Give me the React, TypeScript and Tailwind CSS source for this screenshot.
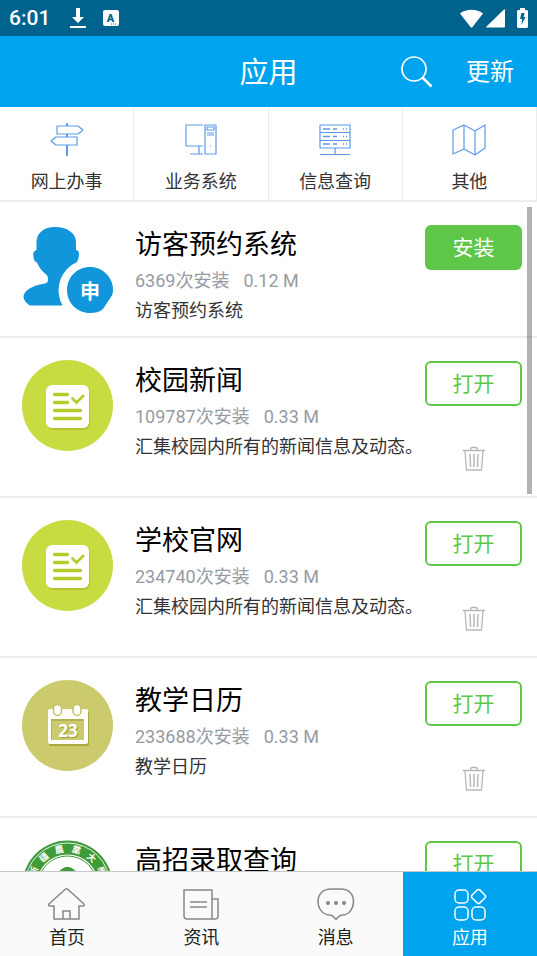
import { FC, ReactNode } from "react";

type AppItem = {
  name: string;
  installs: number;
  size: string;
  description: string;
  installed: boolean;
  icon: ReactNode;
};

const VisitorIcon: FC = () => (
  <svg viewBox="0 0 91 91" className="size-[91px]" aria-hidden="true">
    <path
      fill="#1296db"
      d="M33 3C22 3 14.500 9 14.500 18L14.500 26C11 27 11 30 11.500 33C12 37 13.500 38 15 38.500C17 43 19 46 23 49.500C26 52 26 53 26 56C26 58 25 59 23 59.500C13 61 3 65 1.500 72C1.500 76 4 79 8 81.500L40.500 81.500A31 31 0 0 1 55 38C56 36 57 33 57 30C57 28 56 26 54 26L54 18C54 9 45 3 33 3Z"
    />
    <path
      fill="#1296db"
      d="M68 43C80.500 43 91 53 91 66C91 69 90.500 70.500 89 73L81 85C77.500 88 73 89 68 89C55 89 45 79 45 66C45 53 55 43 68 43Z"
    />
    <text x="68" y="75" textAnchor="middle" fontSize="20" fontWeight="700" fill="#fff">申</text>
  </svg>
);

const NewsIcon: FC = () => (
  <svg viewBox="0 0 91 91" className="size-[91px]" aria-hidden="true">
    <circle cx="45.500" cy="45.500" r="45.500" fill="#c8db40" />
    <rect x="25" y="26" width="43" height="44" rx="6" fill="#b3c52f" />
    <rect x="24" y="25" width="43" height="43" rx="6" fill="#fff" />
    <g fill="none" stroke="#b8cb2c" strokeLinecap="round" strokeWidth="3.400">
      <path d="M32.500 34.500h13M32.500 42.500h13M32.500 50.500h26M32.500 58.500h26" />
      <path d="M50.500 38.500l4 4 6.500-6.500" strokeWidth="2.800" />
    </g>
  </svg>
);

const CalendarIcon: FC = () => (
  <svg viewBox="0 0 91 91" className="size-[91px]" aria-hidden="true">
    <circle cx="45.500" cy="45.500" r="45.500" fill="#cbca6c" />
    <rect x="27" y="31" width="40" height="35" rx="2" fill="#aaa83c" />
    <rect x="26" y="29" width="40" height="35" rx="2" fill="#fff" />
    <rect x="29" y="39" width="33" height="21" fill="#b2b050" />
    <rect x="30" y="41" width="32" height="19" fill="#cbca6c" />
    <g fill="#fff" stroke="#c2c163" strokeWidth="1.500">
      <rect x="31.500" y="24.500" width="8" height="11" rx="4" />
      <rect x="51" y="24.500" width="8" height="11" rx="4" />
    </g>
    <g fontFamily="Open Sans, sans-serif" fontSize="17" fontWeight="700" textAnchor="middle">
      <text x="47" y="58" fill="#a3a132">23</text>
      <text x="46" y="57" fill="#fff">23</text>
    </g>
  </svg>
);

const sealLetters = [
  { char: "新", angle: -67 },
  { char: "疆", angle: -40 },
  { char: "農", angle: -13 },
  { char: "業", angle: 14 },
  { char: "大", angle: 41 },
  { char: "學", angle: 67 },
];

const SealIcon: FC = () => (
  <svg viewBox="0 0 91 91" className="size-[91px]" aria-hidden="true">
    <circle cx="45.500" cy="45.500" r="45" fill="#3f9a38" />
    <circle cx="45.500" cy="45.500" r="42.500" fill="none" stroke="#e5f2e3" strokeWidth="1" />
    <circle cx="45.500" cy="45.500" r="31" fill="#fff" />
    <circle cx="45.500" cy="45.500" r="29.500" fill="none" stroke="#3f9a38" strokeWidth="1" />
    <path fill="#3f9a38" d="M36 32C39 30 41 27 45.500 27C50 27 52 30 55 32L58 50H33Z" />
    {sealLetters.map(({ char, angle }) => (
      <text
        key={char}
        x="45.500"
        y="12"
        fontSize="9"
        fontWeight="700"
        fill="#fff"
        textAnchor="middle"
        transform={`rotate(${angle} 45.500 45.500)`}
      >
        {char}
      </text>
    ))}
  </svg>
);

const TrashIcon: FC = () => (
  <svg viewBox="0 0 24 26" className="h-[26px] w-6" fill="none" stroke="#b8b8b8" strokeWidth="1.300" aria-hidden="true">
    <path d="M1 4.500h22M3 5l1.500 19h15L21 5M8.500 4c0-2 .5-2.500 1.500-2.500h4c1 0 1.500.5 1.500 2.500" />
    <path d="M8 8l.5 13M12 8v13M16 8l-.5 13" strokeWidth="1.500" />
  </svg>
);

const categories = [
  {
    label: "网上办事",
    icon: (
      <>
        <path d="M17 1v3M17 12v3M17 23v11" strokeWidth="2" />
        <path d="M7 4h21l5 4-5 4H7zM27 15H6l-5 4 5 4h21z" />
      </>
    ),
  },
  {
    label: "业务系统",
    icon: (
      <>
        <path d="M19 3H2v21h17M15 24v8M6 32h13M21 3h11v29H21z" />
        <path d="M23 5h7v3h-7zM23 11h7M23 13h7M26 24h1" />
      </>
    ),
  },
  {
    label: "信息查询",
    icon: (
      <>
        <path d="M2 3h30v23H2zM2 10.500h30M2 18.500h30M17 26v6M2 32.500h30" />
        <path d="M5 7h7M15 7h4M25 7h1M28 7h1M5 14.500h7M15 14.500h4M25 14.500h1M28 14.500h1M5 22h7M15 22h4M25 22h1M28 22h1" strokeWidth="1.500" />
      </>
    ),
  },
  {
    label: "其他",
    icon: <path d="M1 8l11-5 11 6 10-6v23l-10 7-11-6-11 5zM12 3v24M23 9v24" />,
  },
];

const apps: AppItem[] = [
  { name: "访客预约系统", installs: 6369, size: "0.12 M", description: "访客预约系统", installed: false, icon: <VisitorIcon /> },
  { name: "校园新闻", installs: 109787, size: "0.33 M", description: "汇集校园内所有的新闻信息及动态。", installed: true, icon: <NewsIcon /> },
  { name: "学校官网", installs: 234740, size: "0.33 M", description: "汇集校园内所有的新闻信息及动态。", installed: true, icon: <NewsIcon /> },
  { name: "教学日历", installs: 233688, size: "0.33 M", description: "教学日历", installed: true, icon: <CalendarIcon /> },
  { name: "高招录取查询", installs: 98120, size: "0.33 M", description: "高招录取查询", installed: true, icon: <SealIcon /> },
];

const tabs = [
  {
    label: "首页",
    active: false,
    icon: <path d="M6 32V19H1.500c-1 0-1-1.500-.5-2L17 2.500c1-1 2-1 3 0L36 17c.5.500.5 2-.5 2H31v13H6zM15 32v-8h7v8" />,
  },
  {
    label: "资讯",
    active: false,
    icon: <path d="M2 3h28v29H5c-2 0-3-1-3-3zM30 12h6v17c0 2-1 3-3 3h-3M8 15h17M8 20h17" />,
  },
  {
    label: "消息",
    active: false,
    icon: (
      <>
        <path d="M14 2h10c8 0 12.500 5 12.500 12.500S32 27.500 26 28c-3 0-4 1-7 4.500C16 29 15 28 12 28 6 27.500 1 22 1 14.500S6 2 14 2z" />
        <path d="M11 16h.1M19 16h.1M27 16h.1" strokeWidth="4" strokeLinecap="round" />
      </>
    ),
  },
  {
    label: "应用",
    active: true,
    icon: (
      <>
        <rect x="4" y="3" width="13" height="13" rx="4" />
        <rect x="4" y="20" width="13" height="13" rx="4" />
        <rect x="21" y="20" width="13" height="13" rx="4" />
        <rect x="22" y="4" width="11" height="11" rx="2" transform="rotate(45 27.500 9.500)" />
      </>
    ),
  },
];

const StatusBar: FC = () => (
  <div className="flex h-9 shrink-0 items-center bg-[#00638e] px-[9px] text-white">
    <span className="pt-0.5 text-[21px] font-medium">6:01</span>
    <svg viewBox="0 0 16 22" className="ml-5 h-[22px] w-4" fill="#fff" aria-hidden="true">
      <path d="M6 1h4v9h4l-6 6-6-6h4zM0 19h16v2H0z" />
    </svg>
    <svg viewBox="0 0 16 16" className="ml-[17px] size-4" aria-hidden="true">
      <rect width="16" height="16" rx="2" fill="#fff" />
      <text x="7.500" y="12" textAnchor="middle" fontSize="11" fontWeight="900" fill="#00638e">A</text>
      <path d="M8 14h6" stroke="#00638e" strokeDasharray="1 1" />
    </svg>
    <svg viewBox="0 0 23 19" className="ml-auto h-[19px] w-[23px]" fill="#fff" aria-hidden="true">
      <path d="M0 4.500C6-.5 17-.5 23 4.500L12.500 18c-.5.700-1.500.700-2 0z" />
    </svg>
    <svg viewBox="0 0 19 19" className="ml-[3px] size-[19px]" fill="#fff" aria-hidden="true">
      <path d="M19 1v16.500c0 .5-.5 1-1 1H1c-1 0-1-.5-.5-1L18 .5c.5-.5 1 0 1 .5z" />
    </svg>
    <svg viewBox="0 0 11 20" className="ml-3 h-5 w-[11px]" aria-hidden="true">
      <path d="M3 0h5v2h2l1 1v16l-1 1H1l-1-1V3l1-1h2z" fill="#fff" />
      <path d="M4.500 5h3L6.500 9h2l-4 8 .5-6H3z" fill="#00638e" />
    </svg>
  </div>
);

const Header: FC = () => (
  <header className="grid h-[71px] shrink-0 grid-cols-[1fr_auto_1fr] items-center bg-[#00a3ee] text-white">
    <h1 className="col-start-2 pt-1 text-[29px]">应用</h1>
    <div className="flex items-center justify-end gap-8 pr-[23px]">
      <button type="button" aria-label="搜索">
        <svg viewBox="0 0 34 34" className="size-[34px]" fill="none" stroke="#fff" aria-hidden="true">
          <circle cx="14" cy="14" r="12" strokeWidth="1.700" />
          <path d="M22.500 22.500l9 9" strokeWidth="2.500" />
        </svg>
      </button>
      <button type="button" className="text-2xl">更新</button>
    </div>
  </header>
);

const AppRow: FC<{ app: AppItem }> = ({ app }) => (
  <li className="flex gap-[22px] border-b-2 border-[#ececec] pt-[22px] pr-[15px] pb-3 pl-[22px]">
    {app.icon}
    <div className="min-w-0 flex-1 pt-0.5 whitespace-nowrap">
      <h2 className="text-[27px] leading-[38px] text-black">{app.name}</h2>
      <p className="flex gap-3.5 text-lg leading-[34px] text-[#969ba3]">
        <span>{app.installs}次安装</span>
        <span>{app.size}</span>
      </p>
      <p className="text-lg leading-[26px] text-[#333]">{app.description}</p>
    </div>
    <div className="flex w-[97px] shrink-0 flex-col items-center">
      {app.installed ? (
        <>
          <button type="button" className="mt-px h-[45px] w-full rounded-md border-2 border-[#5fc748] pt-[3px] text-[21px] text-[#5fc748]">
            打开
          </button>
          <button type="button" aria-label="删除" className="mt-10 mb-3">
            <TrashIcon />
          </button>
        </>
      ) : (
        <button type="button" className="mt-px h-[45px] w-full rounded-md bg-[#5fc748] pt-[3px] text-[21px] text-white">
          安装
        </button>
      )}
    </div>
  </li>
);

export default function App() {
  return (
    <div className="flex h-screen flex-col overflow-hidden bg-white font-['Roboto','Noto_Sans_CJK_SC',sans-serif]">
      <StatusBar />
      <Header />

      <nav className="grid shrink-0 grid-cols-4 border-b-2 border-[#ececec]">
        {categories.map((category) => (
          <a key={category.label} href="#" className="flex flex-col items-center border-r border-[#ececec] pt-[15px] pb-1 text-[#333]">
            <svg viewBox="0 0 34 35" className="h-[35px] w-[34px]" fill="none" stroke="#5b9bea" strokeWidth="1.200" strokeLinejoin="round" aria-hidden="true">
              {category.icon}
            </svg>
            <span className="mt-[11px] text-lg leading-7">{category.label}</span>
          </a>
        ))}
      </nav>

      <main className="relative min-h-0 flex-1 overflow-hidden">
        <ul>
          {apps.map((app) => (
            <AppRow key={app.name} app={app} />
          ))}
        </ul>
        {/* scroll indicator */}
        <div className="absolute top-[5px] right-[5px] h-[287px] w-[5px] bg-black/30" />
      </main>

      <nav className="grid h-[85px] shrink-0 grid-cols-4 border-t border-[#c8c8c8] bg-[#fafafa]">
        {tabs.map((tab) => (
          <a
            key={tab.label}
            href="#"
            className={`flex flex-col items-center pt-[15px] ${tab.active ? "bg-[#00a3ee] text-white" : "text-[#222]"}`}
          >
            <svg
              viewBox="0 0 38 35"
              className={`h-[35px] w-[38px] ${tab.active ? "stroke-white" : "stroke-[#888]"}`}
              fill="none"
              strokeWidth="1.500"
              aria-hidden="true"
            >
              {tab.icon}
            </svg>
            <span className="mt-0.5 text-lg leading-7">{tab.label}</span>
          </a>
        ))}
      </nav>
    </div>
  );
}
